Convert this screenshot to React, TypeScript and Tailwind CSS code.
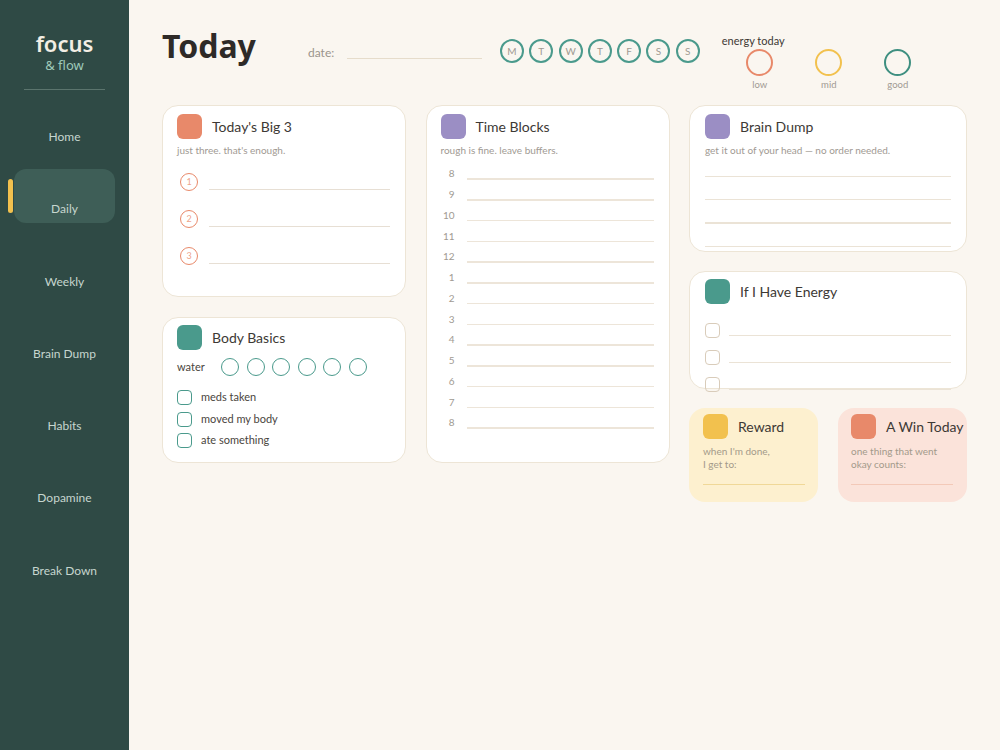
import React from "react";

const body = { fontFamily: "Lato, 'Noto Sans', sans-serif" };
const head = { fontFamily: "'Noto Sans', Lato, sans-serif" };

const nav = ["Home", "Daily", "Weekly", "Brain Dump", "Habits", "Dopamine", "Break Down"];

function CardHeader({ color, title }: { color: string; title: string }) {
  return (
    <div className="flex items-center gap-[10px]">
      <div className={`w-[25px] h-[25px] rounded-[6px] shrink-0 ${color}`} />
      <div className="text-[14px] leading-[18px] text-[#3d3935] whitespace-nowrap">{title}</div>
    </div>
  );
}

function Sub({ children }: { children: React.ReactNode }) {
  return <div className="mt-[4px] text-[10px] leading-[14px] text-[#a19a93]">{children}</div>;
}

export default function App() {
  const hours = ["8", "9", "10", "11", "12", "1", "2", "3", "4", "5", "6", "7", "8"];
  return (
    <div className="flex w-[1000px] h-[750px] overflow-hidden" style={body}>
      <aside className="w-[129px] shrink-0 bg-[#2f4a45] flex flex-col items-center">
        <div className="mt-[29px] text-[22px] leading-[28px] font-semibold text-[#f3eee4]" style={head}>
          focus
        </div>
        <div className="text-[13px] leading-[16px] text-[#9ec9b9]" style={head}>& flow</div>
        <div className="mt-[16px] w-[81px] h-[1px] bg-[#5b746d]" />
        <div className="mt-[7px] flex flex-col gap-[18.3px]">
          {nav.map((n) => (
            <div
              key={n}
              className={`relative w-[101px] h-[54px] rounded-[12px] flex flex-col justify-end items-center pb-[5px] ${
                n === "Daily" ? "bg-[#3e5e57]" : ""
              }`}
            >
              {n === "Daily" && (
                <div className="absolute left-[-6px] top-[10px] w-[5px] h-[34px] rounded-full bg-[#f2c14e]" />
              )}
              <div className="text-[12px] leading-[18px] text-[#c6d6cf]">{n}</div>
            </div>
          ))}
        </div>
      </aside>

      <main className="flex-1 bg-[#faf6f0] px-[33px] pt-[28px]">
        <div className="flex items-start h-[77px]">
          <div className="w-[146px] text-[32px] leading-[36px] font-bold text-[#2e2a27]" style={head}>
            Today
          </div>
          <div className="mt-[17px] w-[39px] text-[12px] leading-[16px] text-[#9a948c]">date:</div>
          <div className="mt-[30px] w-[135px] h-[1px] bg-[#e6dccb]" />
          <div className="ml-[18px] mt-[11px] flex gap-[5.3px]">
            {["M", "T", "W", "T", "F", "S", "S"].map((d, i) => (
              <div
                key={i}
                className="w-[24px] h-[24px] rounded-full border-[2px] border-[#4a9a8c] flex items-center justify-center text-[10px] text-[#a09a92]"
              >
                {d}
              </div>
            ))}
          </div>
          <div className="ml-[22px] mt-[6px] flex flex-col">
            <div className="text-[11px] leading-[14px] text-[#3d3935]">energy today</div>
            <div className="ml-[10px] mt-[1px] flex gap-[13px]">
              {[
                ["low", "border-[#e8896a]"],
                ["mid", "border-[#f2c14e]"],
                ["good", "border-[#3e8f80]"],
              ].map(([l, c]) => (
                <div key={l} className="w-[56px] flex flex-col items-center">
                  <div className={`w-[27px] h-[27px] rounded-full border-[2.5px] ${c}`} />
                  <div className="mt-[3px] text-[9.5px] leading-[12px] text-[#a19a93]">{l}</div>
                </div>
              ))}
            </div>
          </div>
        </div>

        <div className="grid grid-cols-[244px_244px_278px] gap-x-[19.5px] items-start">
          {/* Column 1 */}
          <div className="flex flex-col gap-[20px]">
            <div className="h-[192px] bg-white border border-[#ede5d6] rounded-[16px] pt-[8px] pl-[14px] pr-[15px]">
              <CardHeader color="bg-[#e8896a]" title="Today's Big 3" />
              <Sub>just three. that's enough.</Sub>
              <div className="mt-[16px] flex flex-col gap-[19px]">
                {[1, 2, 3].map((n) => (
                  <div key={n} className="flex items-end h-[18px]">
                    <div className="ml-[3px] w-[18px] h-[18px] rounded-full border-[1.5px] border-[#e8896a] flex items-center justify-center text-[9px] text-[#eea48c]">
                      {n}
                    </div>
                    <div className="ml-[11px] flex-1 h-[1.3px] mb-[1px] bg-[#e7dfd4]" />
                  </div>
                ))}
              </div>
            </div>

            <div className="h-[146px] bg-white border border-[#ede5d6] rounded-[16px] pt-[7px] pl-[14px] pr-[15px]">
              <CardHeader color="bg-[#4a9a8c]" title="Body Basics" />
              <div className="mt-[8px] flex items-center h-[18px]">
                <div className="w-[44px] text-[11px] text-[#4a4540]">water</div>
                <div className="flex gap-[7.5px]">
                  {[0, 1, 2, 3, 4, 5].map((i) => (
                    <div key={i} className="w-[18px] h-[18px] rounded-full border-[1.5px] border-[#4a9a8c]" />
                  ))}
                </div>
              </div>
              <div className="mt-[14px] flex flex-col gap-[6.5px]">
                {["meds taken", "moved my body", "ate something"].map((t) => (
                  <div key={t} className="flex items-center h-[15px]">
                    <div className="w-[15px] h-[15px] rounded-[4px] border-[1.5px] border-[#4a9a8c]" />
                    <div className="ml-[9px] text-[11px] text-[#4a4540]">{t}</div>
                  </div>
                ))}
              </div>
            </div>
          </div>

          {/* Column 2 */}
          <div className="h-[358px] bg-white border border-[#ede5d6] rounded-[16px] pt-[8px] pl-[14px] pr-[15px]">
            <CardHeader color="bg-[#9b8ec4]" title="Time Blocks" />
            <Sub>rough is fine. leave buffers.</Sub>
            <div className="mt-[2px] flex flex-col">
              {hours.map((h, i) => (
                <div key={i} className="flex items-end h-[20.75px]">
                  <div className="w-[14px] text-right text-[10px] leading-[12px] text-[#a09a92] mb-[0.5px]">{h}</div>
                  <div className="ml-[12px] flex-1 h-[1.3px] bg-[#ede5d9]" />
                </div>
              ))}
            </div>
          </div>

          {/* Column 3 */}
          <div className="flex flex-col gap-[19px]">
            <div className="h-[147px] bg-white border border-[#ede5d6] rounded-[16px] pt-[8px] pl-[15px] pr-[15px]">
              <CardHeader color="bg-[#9b8ec4]" title="Brain Dump" />
              <Sub>get it out of your head — no order needed.</Sub>
              <div className="mt-[18.5px] flex flex-col gap-[22.2px]">
                {[0, 1, 2, 3].map((i) => (
                  <div key={i} className="h-[1.3px] bg-[#ebe3d6]" />
                ))}
              </div>
            </div>

            <div className="h-[118px] bg-white border border-[#ede5d6] rounded-[16px] pt-[7px] pl-[15px] pr-[15px]">
              <CardHeader color="bg-[#4a9a8c]" title="If I Have Energy" />
              <div className="mt-[19px] flex flex-col gap-[12px]">
                {[0, 1, 2].map((i) => (
                  <div key={i} className="flex items-end h-[15px]">
                    <div className="w-[15px] h-[15px] rounded-[4px] border-[1.5px] border-[#d9ccba] shrink-0" />
                    <div className="ml-[9px] flex-1 h-[1.3px] mb-[2px] bg-[#ebe3d6]" />
                  </div>
                ))}
              </div>
            </div>

            <div className="flex gap-[20px]">
              <div className="w-[129px] h-[94px] bg-[#fdf0cf] rounded-[16px] pt-[6px] pl-[14px] pr-[13px]">
                <CardHeader color="bg-[#f2c14e]" title="Reward" />
                <div className="mt-[5.5px] text-[10px] leading-[13px] text-[#a39a8a]">
                  when I'm done,
                  <br />I get to:
                </div>
                <div className="mt-[13px] h-[1.5px] bg-[#f0d898]" />
              </div>
              <div className="w-[129px] h-[94px] bg-[#fbe3da] rounded-[16px] pt-[6px] pl-[13px] pr-[14px]">
                <CardHeader color="bg-[#e8896a]" title="A Win Today" />
                <div className="mt-[5.5px] text-[10px] leading-[13px] text-[#a39a8a]">
                  one thing that went
                  <br />
                  okay counts:
                </div>
                <div className="mt-[13px] h-[1.5px] bg-[#f3c9b8]" />
              </div>
            </div>
          </div>
        </div>
      </main>
    </div>
  );
}
